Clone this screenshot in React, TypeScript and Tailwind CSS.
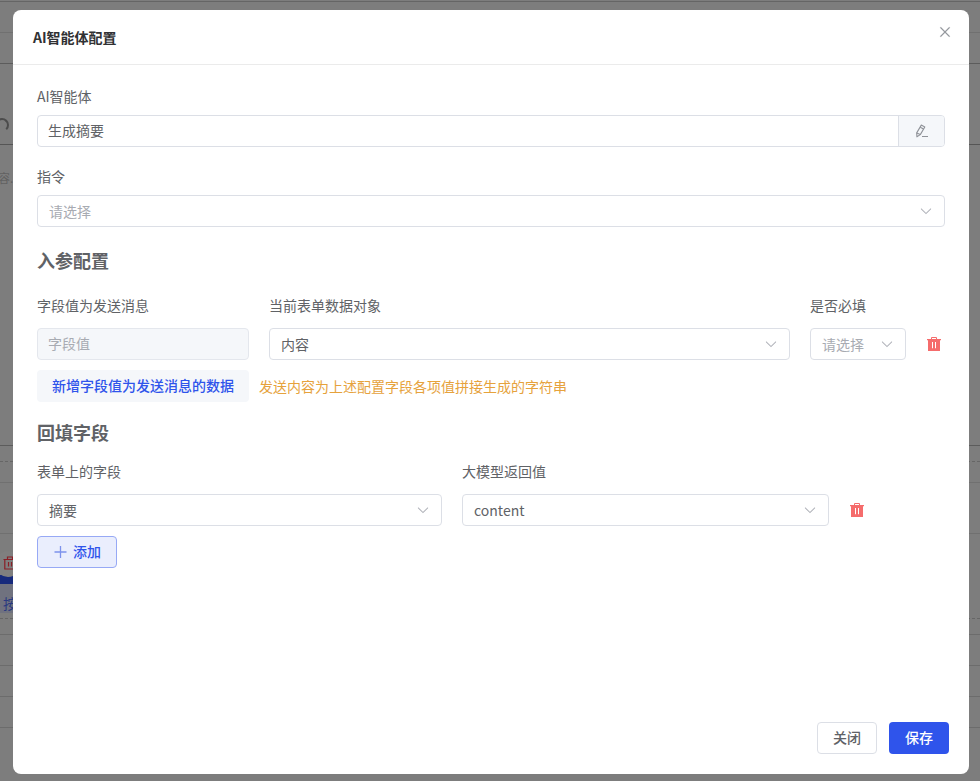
import { useState, type ReactNode } from 'react';

const backdropLines = [
  { top: 'top-[1px]', style: 'border-solid border-[#656565]' },
  { top: 'top-[32px]', style: 'border-solid border-[#707070]' },
  { top: 'top-[63px]', style: 'border-solid border-[#5c5c5c]' },
  { top: 'top-[144px]', style: 'border-solid border-[#555555]' },
  { top: 'top-[445px]', style: 'border-solid border-[#5c5c5c]' },
  { top: 'top-[461px]', style: 'border-dashed border-[#666666]' },
  { top: 'top-[482px]', style: 'border-solid border-[#707070]' },
  { top: 'top-[533px]', style: 'border-solid border-[#707070]' },
  { top: 'top-[618px]', style: 'border-dashed border-[#666666]' },
  { top: 'top-[634px]', style: 'border-solid border-[#6c6c6c]' },
  { top: 'top-[665px]', style: 'border-solid border-[#6c6c6c]' },
  { top: 'top-[696px]', style: 'border-solid border-[#6c6c6c]' },
  { top: 'top-[727px]', style: 'border-solid border-[#6c6c6c]' },
];

function ArrowDown() {
  return (
    <svg viewBox="0 0 1024 1024" className="h-3.5 w-3.5 shrink-0 text-[#a8abb2]" fill="currentColor" stroke="currentColor" strokeWidth="14">
      <path d="M831.872 340.864 512 652.672 192.128 340.864a30.592 30.592 0 0 0-42.752 0 29.12 29.12 0 0 0 0 41.6L489.664 714.24a32 32 0 0 0 44.672 0l340.288-331.712a29.12 29.12 0 0 0 0-41.728 30.592 30.592 0 0 0-42.752 0z" />
    </svg>
  );
}

function CloseIcon() {
  return (
    <svg viewBox="0 0 1024 1024" className="h-4 w-4" fill="currentColor" stroke="currentColor" strokeWidth="14">
      <path d="M764.288 214.592 512 466.88 259.712 214.592a31.936 31.936 0 0 0-45.12 45.12L466.752 512 214.528 764.224a31.936 31.936 0 1 0 45.12 45.184L512 557.184l252.288 252.288a31.936 31.936 0 0 0 45.12-45.12L557.12 512.064l252.288-252.352a31.936 31.936 0 1 0-45.12-45.184z" />
    </svg>
  );
}

function EditIcon() {
  return (
    <svg viewBox="0 0 14 14" className="h-3.5 w-3.5" fill="none" stroke="currentColor" strokeWidth="1.1" strokeLinejoin="round">
      <path d="M6.3 1.1 9.8 3 5.3 10.6 1.9 12.8 1.7 8.9Z" />
      <path d="M5.2 3.2 8.6 5.1M1.7 8.9l3.6 1.7" />
      <path d="M7 12.5h6" />
    </svg>
  );
}

function TrashIcon() {
  return (
    <svg viewBox="0 0 14 14" className="h-3.5 w-3.5" fill="none">
      <path d="M4.5 2.5V.5h5v2" stroke="#f56c6c" strokeWidth="1" />
      <path fill="#f56c6c" fillRule="evenodd" d="M0 2h14v1.2h-1v10.8H1V3.2H0ZM5 5v6.2h1V5Zm3 0v6.2h1V5Z" />
    </svg>
  );
}

function Label({ children }: { children: ReactNode }) {
  return <div className="h-[22px] text-sm leading-5 text-[#606266]">{children}</div>;
}

function Select({ value, placeholder, className = '' }: { value?: string; placeholder?: string; className?: string }) {
  return (
    <button type="button" className={`flex h-8 items-center justify-between rounded border border-[#dcdfe6] bg-white px-[11px] text-left ${className}`}>
      <span className={`text-sm leading-6 ${value ? 'text-[#606266]' : 'text-[#a8abb2]'}`}>{value || placeholder}</span>
      <ArrowDown />
    </button>
  );
}

function Backdrop() {
  return (
    <div className="absolute inset-0 overflow-hidden bg-[#7d7d7d]">
      {backdropLines.map((line) => (
        <div key={line.top} className={`absolute inset-x-0 border-t ${line.top} ${line.style}`} />
      ))}
      <div className="absolute top-[118px] left-[-5px] h-[14px] w-[14px] rounded-full border-2 border-b-transparent border-[#4c4c4c]" />
      <div className="absolute top-[168px] left-[-2px] text-xs leading-5 text-[#616161]">容.</div>
      <div className="absolute top-[575px] left-0 h-[9px] w-[13px] bg-[#172a7c]" />
      <div className="absolute top-[551px] left-[-5px] h-[26px] w-[26px] rounded-full bg-[#7f7f7f]" />
      <svg viewBox="0 0 14 14" className="absolute top-[556px] left-[3px] h-3.5 w-3.5" fill="none" stroke="#8a1f27" strokeWidth="1.2">
        <path d="M.5 3.5h13M4.5 3V1h5v2M1.8 3.5v9.5h10.4V3.5M5.5 6v4.5M8.5 6v4.5" />
      </svg>
      <div className="absolute top-[584px] left-0 h-[29px] w-[13px] bg-[#70727f]" />
      <div className="absolute top-[592px] left-[3px] text-sm leading-[22px] text-[#2a3a80]">按</div>
    </div>
  );
}

export default function App() {
  const [agent, setAgent] = useState('生成摘要');
  const [open, setOpen] = useState(true);

  return (
    <div className="relative h-[781px] w-[980px] overflow-hidden font-['Noto_Sans_CJK_SC',sans-serif]">
      <Backdrop />

      {open && (
        <div className="relative mt-[10px] ml-[13px] flex h-[764px] w-[956px] flex-col rounded-lg bg-white">
          <header className="flex h-[55px] shrink-0 items-start justify-between border-b border-[#ebebeb] pr-4 pl-5">
            <h1 className="pt-[15px] text-sm leading-6 font-bold text-[#303133]">AI智能体配置</h1>
            <button type="button" onClick={() => setOpen(false)} className="mt-[14px] text-[#909399]"><CloseIcon /></button>
          </header>

          <main className="flex-1 px-6 pt-[21px]">
            <Label>AI智能体</Label>
            <div className="mt-[7px] flex h-8 overflow-hidden rounded border border-[#dcdfe6]">
              <input value={agent} onChange={(e) => setAgent(e.target.value)} className="min-w-0 flex-1 px-[10px] pb-0.5 text-sm text-[#606266] outline-none" />
              <button type="button" className="flex w-[46px] items-center justify-center border-l border-[#dcdfe6] bg-[#f5f7fa] text-[#909399]"><EditIcon /></button>
            </div>

            <div className="mt-[19px]">
              <Label>指令</Label>
              <Select placeholder="请选择" className="mt-[7px] w-full" />
            </div>

            <h2 className="mt-5 h-7 text-lg leading-[26px] font-bold text-[#606266]">入参配置</h2>
            <div className="mt-5 flex gap-5">
              <div className="w-[212px]">
                <Label>字段值为发送消息</Label>
                <input disabled placeholder="字段值" className="mt-[11px] block h-8 w-full rounded border border-[#e4e7ed] bg-[#f5f7fa] px-[10px] pb-0.5 text-sm placeholder:text-[#a8abb2]" />
              </div>
              <div className="w-[521px]">
                <Label>当前表单数据对象</Label>
                <Select value="内容" className="mt-[11px] w-full" />
              </div>
              <div className="w-24">
                <Label>是否必填</Label>
                <Select placeholder="请选择" className="mt-[11px] w-full" />
              </div>
              <button type="button" className="mt-[33px] ml-px flex h-8 items-center"><TrashIcon /></button>
            </div>
            <div className="mt-[10px] flex items-center gap-[10px]">
              <button type="button" className="h-8 w-[212px] rounded bg-[#f5f7fa] pb-0.5 text-sm font-medium text-[#2f54eb]">新增字段值为发送消息的数据</button>
              <span className="pb-px text-sm text-[#e6a23c]">发送内容为上述配置字段各项值拼接生成的字符串</span>
            </div>

            <h2 className="mt-[17px] h-7 text-lg leading-[26px] font-bold text-[#606266]">回填字段</h2>
            <div className="mt-[14px] flex gap-5">
              <div className="w-[405px]">
                <Label>表单上的字段</Label>
                <Select value="摘要" className="mt-[11px] w-full" />
              </div>
              <div className="w-[367px]">
                <Label>大模型返回值</Label>
                <Select value="content" className="mt-[11px] w-full" />
              </div>
              <button type="button" className="mt-[33px] ml-px flex h-8 items-center"><TrashIcon /></button>
            </div>
            <button type="button" className="mt-[10px] flex h-8 w-20 items-center justify-center gap-1.5 rounded border border-[#97a9f5] bg-[#eaeefd] text-sm font-medium text-[#2f54eb]">
              <svg viewBox="0 0 14 14" className="h-3.5 w-3.5" fill="none" stroke="#7d92ec" strokeWidth="1.3"><path d="M1.5 7h12M7.5 1v12" /></svg>
              <span className="pb-0.5">添加</span>
            </button>
          </main>

          <footer className="flex justify-end gap-3 px-5 pb-5">
            <button type="button" onClick={() => setOpen(false)} className="h-8 w-[60px] rounded border border-[#dcdfe6] pb-0.5 text-sm font-medium text-[#606266]">关闭</button>
            <button type="button" className="h-8 w-[60px] rounded bg-[#2f54eb] pb-0.5 text-sm font-medium text-white">保存</button>
          </footer>
        </div>
      )}
    </div>
  );
}
